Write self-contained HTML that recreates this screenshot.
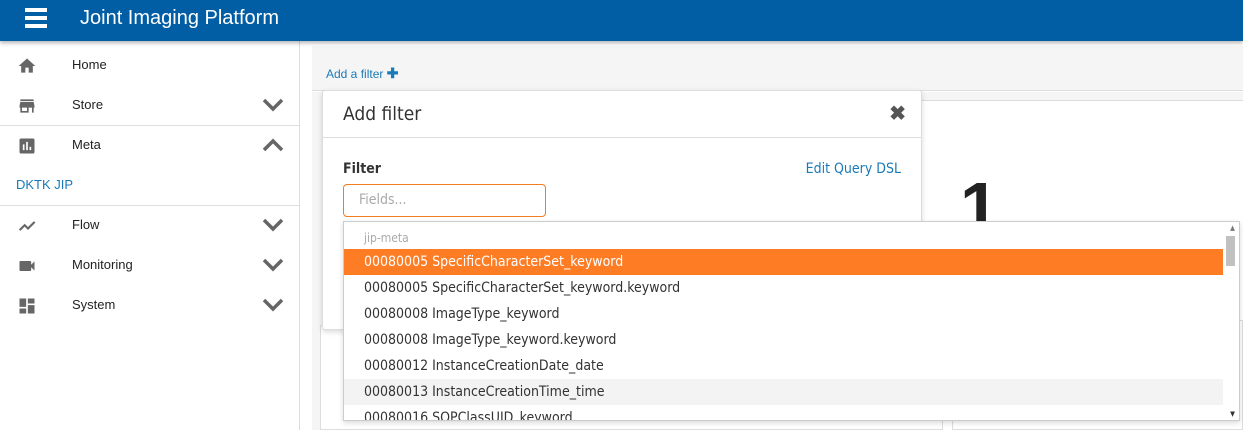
<!DOCTYPE html>
<html><head><style>
*{box-sizing:border-box;margin:0;padding:0}
body{width:1243px;height:430px;overflow:hidden;font-family:"Liberation Sans",sans-serif;background:#fff;position:relative}
.hdr{position:absolute;left:0;top:0;width:1243px;height:41px;background:#015ea4;box-shadow:0 2px 4px rgba(0,0,0,.3);z-index:5}
.hdr .t{position:absolute;left:80px;top:7px;color:#fff;font-size:20px}
.burger{position:absolute;left:25px;top:8px;width:22px}
.burger div{height:3.5px;background:#fff;margin-bottom:4.5px}
.side{position:absolute;left:0;top:41px;width:300px;height:389px;border-right:1px solid #ddd;background:#fff}
.it{position:absolute;left:0;width:299px;height:40px;font-size:13px;color:#222}
.it span{position:absolute;left:72px;top:13px}
.it svg.i{position:absolute;left:17px;top:12px}
.chev{position:absolute;left:262px;top:14px}
.div{position:absolute;left:0;width:299px;height:1px;background:#ddd}
.main{position:absolute;left:312px;top:46px;width:931px;height:45px;background:#f5f5f5;border-bottom:1px solid #ddd}
.main a{position:absolute;left:14px;top:19px;font-size:12px;color:#1a7ab8}
.opt{font-family:"DejaVu Sans Condensed","Liberation Sans",sans-serif}
</style></head><body>
<div class="hdr"><div class="burger"><div></div><div></div><div></div></div><div class="t">Joint Imaging Platform</div></div>
<div class="side">
<div class="it" style="top:3px"><svg class="i" width="20" height="20" viewBox="0 0 24 24"><path d="M10 20v-6h4v6h5v-8h3L12 3 2 12h3v8z" fill="#666"/></svg><span>Home</span></div>
<div class="it" style="top:43px"><svg class="i" width="20" height="20" viewBox="0 0 24 24"><path d="M4 4h16v2H4zm16 3H4l-1 5v2h1v6h10v-6h4v6h2v-6h1v-2zm-8 11H6v-4h6z" fill="#666"/></svg><span>Store</span><svg class="chev" width="22" height="14" viewBox="0 0 22 14"><path d="M2 2l9 9 9-9" stroke="#666" stroke-width="3.5" fill="none"/></svg></div>
<div class="div" style="top:84px"></div>
<div class="it" style="top:83px"><svg class="i" width="20" height="20" viewBox="0 0 24 24"><path d="M19 3H5a2 2 0 0 0-2 2v14a2 2 0 0 0 2 2h14a2 2 0 0 0 2-2V5a2 2 0 0 0-2-2zM9 17H7v-7h2zm4 0h-2V7h2zm4 0h-2v-4h2z" fill="#666"/></svg><span>Meta</span><svg class="chev" width="22" height="14" viewBox="0 0 22 14"><path d="M2 12l9-9 9 9" stroke="#666" stroke-width="3.5" fill="none"/></svg></div>
<div class="it" style="top:123px;color:#1a7ab8"><span style="left:16px">DKTK JIP</span></div>
<div class="div" style="top:164px"></div>
<div class="it" style="top:163px"><svg class="i" width="22" height="20" viewBox="0 0 24 24"><path d="M2 17l6-6 4 4 8-8" stroke="#666" stroke-width="2.5" fill="none"/></svg><span>Flow</span><svg class="chev" width="22" height="14" viewBox="0 0 22 14"><path d="M2 2l9 9 9-9" stroke="#666" stroke-width="3.5" fill="none"/></svg></div>
<div class="it" style="top:203px"><svg class="i" width="20" height="20" viewBox="0 0 24 24"><path d="M17 10.5V7a1 1 0 0 0-1-1H4a1 1 0 0 0-1 1v10a1 1 0 0 0 1 1h12a1 1 0 0 0 1-1v-3.5l4 4v-11z" fill="#666"/></svg><span>Monitoring</span><svg class="chev" width="22" height="14" viewBox="0 0 22 14"><path d="M2 2l9 9 9-9" stroke="#666" stroke-width="3.5" fill="none"/></svg></div>
<div class="it" style="top:243px"><svg class="i" width="20" height="20" viewBox="0 0 24 24"><path d="M3 13h8V3H3zm0 8h8v-6H3zm10 0h8V11h-8zm0-18v6h8V3z" fill="#666"/></svg><span>System</span><svg class="chev" width="22" height="14" viewBox="0 0 22 14"><path d="M2 2l9 9 9-9" stroke="#666" stroke-width="3.5" fill="none"/></svg></div>
</div>
<div class="main"><a>Add a filter <b style="font-size:14px">✚</b></a></div>
<div style="position:absolute;left:312px;top:92px;width:931px;height:338px;background:#f5f5f5"></div>
<div style="position:absolute;left:921px;top:100px;width:322px;height:330px;background:#fff;border-top:1px solid #ddd"></div>
<div style="position:absolute;left:960px;top:172px;font-size:70px;font-weight:bold;color:#222;line-height:1">1</div>
<div style="position:absolute;left:320px;top:325px;width:623px;height:105px;background:#fff;border:1px solid #ddd"></div>
<div style="position:absolute;left:952px;top:320px;width:291px;height:110px;background:#fff;border:1px solid #ddd"></div>
<div style="position:absolute;left:322px;top:90px;width:600px;height:240px;background:#fff;border:1px solid #ddd;border-radius:3px;box-shadow:0 2px 6px rgba(0,0,0,.15)">
<div class="opt" style="position:absolute;left:20px;top:12px;font-size:19px;color:#333">Add filter</div>
<div style="position:absolute;right:15px;top:10px;font-size:20px;color:#555;font-weight:bold">✖</div>
<div style="position:absolute;left:0;top:46px;width:598px;height:1px;background:#ddd"></div>
<div class="opt" style="position:absolute;left:20px;top:70px;font-size:14px;font-weight:bold;color:#333">Filter</div>
<div class="opt" style="position:absolute;right:20px;top:70px;font-size:14px;color:#1a7ab8">Edit Query DSL</div>
<div class="opt" style="position:absolute;left:20px;top:93px;width:203px;height:33px;border:1px solid #f47b20;border-radius:4px;font-size:14px;color:#aaa;padding:7px 15px">Fields...</div>
</div>
<div class="opt" style="position:absolute;left:343px;top:221px;width:897px;height:200px;background:#fff;border:1px solid #ccc;box-shadow:0 2px 5px rgba(0,0,0,.15);overflow:hidden;font-size:14px;color:#333">
<div style="height:27px;padding:9px 20px 0;font-size:12px;color:#aaa">jip-meta</div>
<div style="height:26px;padding:5px 20px;background:#fe7c23;color:#fff;width:880px">00080005 SpecificCharacterSet_keyword</div>
<div style="height:26px;padding:5px 20px">00080005 SpecificCharacterSet_keyword.keyword</div>
<div style="height:26px;padding:5px 20px">00080008 ImageType_keyword</div>
<div style="height:26px;padding:5px 20px">00080008 ImageType_keyword.keyword</div>
<div style="height:26px;padding:5px 20px">00080012 InstanceCreationDate_date</div>
<div style="height:26px;padding:5px 20px;background:#f3f3f3;width:880px">00080013 InstanceCreationTime_time</div>
<div style="height:26px;padding:5px 20px">00080016 SOPClassUID_keyword</div>
<div style="position:absolute;right:0;top:0;width:16px;height:198px;background:#fff"></div>
<div style="position:absolute;right:4px;top:14px;width:9px;height:30px;background:#c1c1c1"></div>
<div style="position:absolute;right:4px;top:2px;font-size:7px;color:#777">▲</div>
<div style="position:absolute;right:4px;bottom:2px;font-size:7px;color:#333">▼</div>
</div>
</body></html>
